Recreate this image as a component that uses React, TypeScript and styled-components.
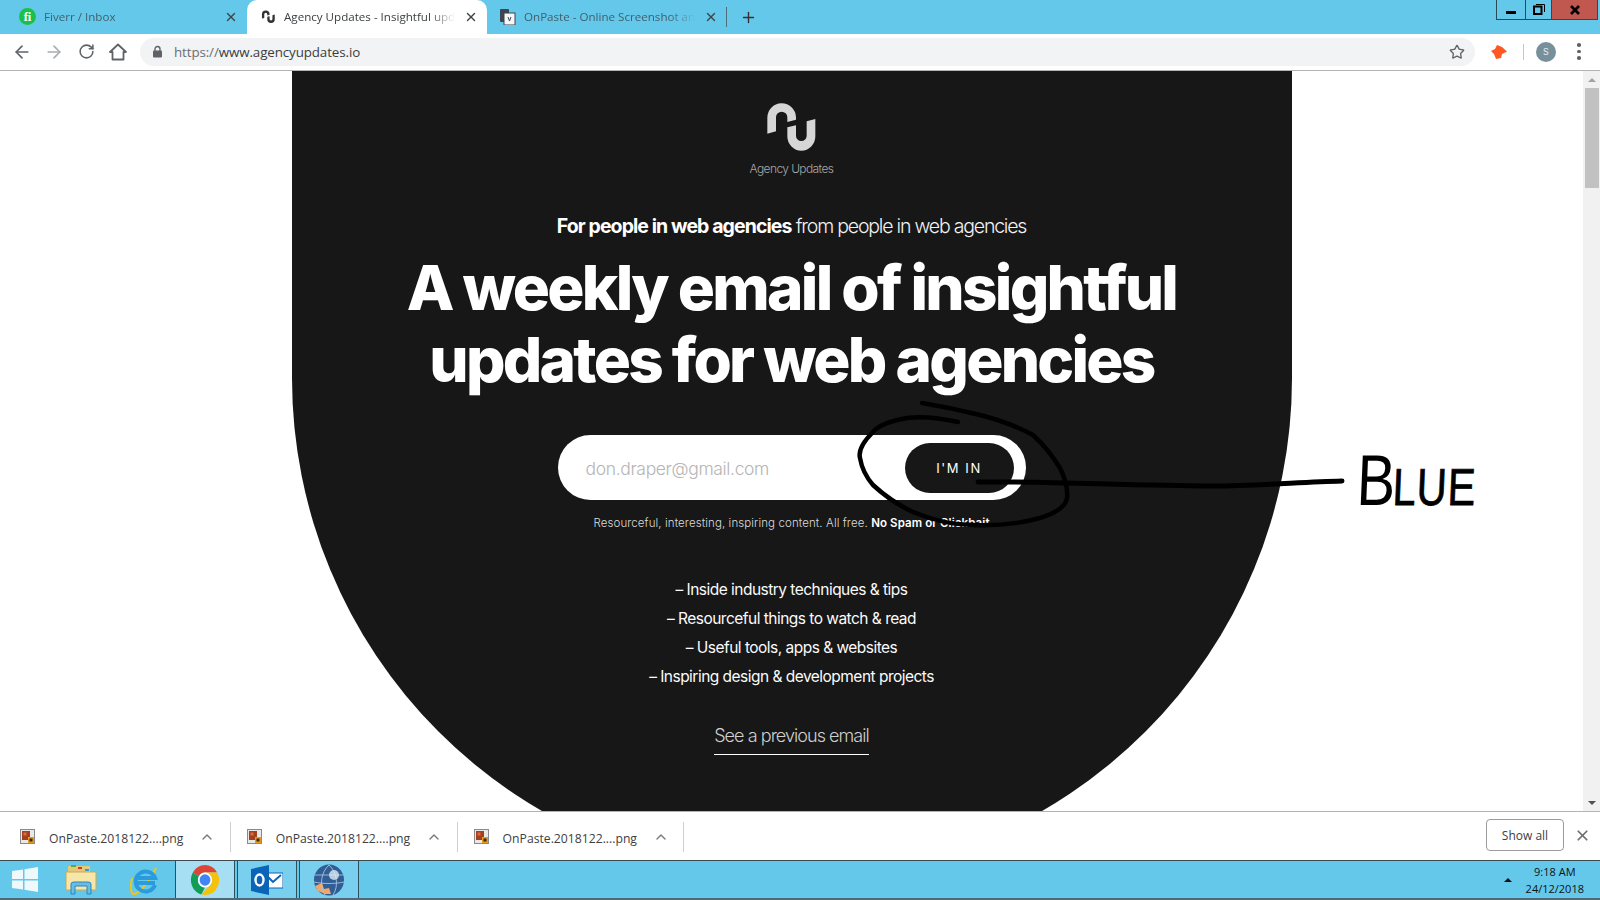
import React from "react";
import styled, { createGlobalStyle } from "styled-components";
import { ArrowLeft, ArrowRight, RotateCw, Star, X, ChevronUp, Plus } from "lucide-react";

const Global = createGlobalStyle`
  html, body { margin: 0; padding: 0; width: 1600px; height: 900px; overflow: hidden; background: #fff; }
  * { box-sizing: border-box; }
`;

const UI = `"Open Sans", "Liberation Sans", sans-serif`;
const SANS = `Inter, "Liberation Sans", sans-serif`;

const Shell = styled.div`
  width: 1600px; height: 900px; display: flex; flex-direction: column; font-family: ${UI};
`;

const TabStrip = styled.div`
  height: 34px; flex: none; background: #63c8ea; display: flex; align-items: flex-end; padding-left: 7px;
`;
const Tab = styled.div<{ $active?: boolean }>`
  width: 240px; height: 34px; display: flex; align-items: center; padding: 0 8px 1px 12px; gap: 8px;
  background: ${p => (p.$active ? "#fff" : "transparent")};
  border-radius: 10px 10px 0 0;
  color: ${p => (p.$active ? "#3c4043" : "#44606c")};
`;
const TabIcon = styled.span`
  width: 17px; height: 17px; flex: none; display: flex; align-items: center; justify-content: center;
`;
const TabTitle = styled.span`
  flex: 1; min-width: 0; font-size: 11.6px; white-space: nowrap; overflow: hidden;
  -webkit-mask-image: linear-gradient(to right, #000 85%, transparent 100%);
  mask-image: linear-gradient(to right, #000 85%, transparent 100%);
`;
const TabClose = styled.span`
  width: 16px; height: 16px; flex: none; display: flex; align-items: center; justify-content: center; color: #444;
`;
const TabDivider = styled.span`
  width: 1px; height: 20px; margin: 0 0 7px -1px; background: #4d6f7d; flex: none;
`;
const NewTab = styled.span`
  width: 42px; height: 34px; display: flex; align-items: center; justify-content: center; color: #333;
`;
const WindowControls = styled.div`
  margin-left: auto; margin-right: 2px; align-self: flex-start; height: 20px; display: flex;
  border: 1px solid #2b4a58; border-top: none;
`;
const WinButton = styled.span<{ $w: number; $close?: boolean }>`
  width: ${p => p.$w}px; display: flex; align-items: center; justify-content: center;
  background: ${p => (p.$close ? "#c0584f" : "transparent")};
  & + & { border-left: 1px solid #2b4a58; }
`;

const Toolbar = styled.div`
  height: 37px; flex: none; background: #fff; border-bottom: 1px solid #b4b4b4; display: flex; align-items: center;
  padding-bottom: 1px; color: #5f6368;
`;
const NavButton = styled.span<{ $muted?: boolean }>`
  width: 32px; height: 32px; flex: none; display: flex; align-items: center; justify-content: center;
  color: ${p => (p.$muted ? "#a9adb1" : "#5f6368")};
`;
const NavGroup = styled.div`
  display: flex; padding-left: 6px; margin-right: 6px;
`;
const Omnibox = styled.div`
  width: 1335px; height: 28px; background: #f1f3f4; border-radius: 14px; display: flex; align-items: center; padding: 0 10px 0 12px;
`;
const UrlText = styled.span`
  margin-left: 11px; font-family: ${UI}; font-size: 13.35px; color: #3a3d40; letter-spacing: -0.1px;
`;
const UrlScheme = styled.span` color: #6a6e72; `;
const StarSlot = styled.span` margin-left: auto; display: flex; color: #5f6368; `;
const ToolExtras = styled.div`
  display: flex; align-items: center; flex: 1; padding-left: 16px;
`;
const ExtDivider = styled.span` width: 1px; height: 16px; background: #c4c7c9; margin-left: 15px; `;
const Avatar = styled.span`
  width: 20px; height: 20px; border-radius: 50%; background: #78909c; color: #e8edf0; font-size: 9px;
  display: flex; align-items: center; justify-content: center; margin-left: 12px; font-family: ${SANS};
`;
const Dots = styled.span`
  margin-left: 21px; display: flex; flex-direction: column; gap: 3px;
`;
const Dot = styled.i` width: 3.5px; height: 3.5px; border-radius: 50%; background: #5f6368; display: block; `;

const Page = styled.div`
  flex: 1; min-height: 0; position: relative; display: flex; overflow: hidden; background: #fff;
`;
const PageBody = styled.div`
  flex: 1; display: flex; justify-content: center; align-items: flex-start;
`;
const Scrollbar = styled.div`
  width: 17px; flex: none; background: #f1f1f1; display: flex; flex-direction: column; align-items: center;
`;
const ScrollArrow = styled.span<{ $down?: boolean }>`
  width: 0; height: 0; border-left: 4px solid transparent; border-right: 4px solid transparent;
  ${p => (p.$down ? "border-top: 4px solid #505050; margin-top: auto; margin-bottom: 6px;" : "border-bottom: 4px solid #a3a3a3; margin-top: 7px;")}
`;
const ScrollThumb = styled.span`
  width: 14px; height: 100px; background: #c1c1c1; margin-top: 6px;
`;

const Hero = styled.section`
  width: 1000px; height: 807px; flex: none; background: #171717; border-radius: 0 0 500px 500px;
  display: flex; flex-direction: column; align-items: center; padding-top: 27px; font-family: ${SANS}; color: #fff;
`;
const LogoMark = styled.svg` width: 60px; height: 60px; display: block; flex: none; margin-left: -3px; `;
const LogoLabel = styled.div`
  font-size: 12px; line-height: 21px; color: #a8a8a8; font-weight: 300; letter-spacing: -0.6px;
`;
const Lead = styled.p`
  margin: 33px 0 0; font-size: 19.5px; line-height: 28px; letter-spacing: -1.2px; font-weight: 300; color: #f2f2f2;
`;
const LeadStrong = styled.strong` font-weight: 700; color: #fff; letter-spacing: -0.92px; `;
const Headline = styled.h1`
  margin: 12px 0 0; font-size: 62px; line-height: 72px; font-weight: 800; letter-spacing: -2.72px; text-align: center;
`;
const Signup = styled.form`
  margin-top: 39px; width: 468px; height: 65px; border-radius: 33px; background: #fff; display: flex; align-items: center;
  padding: 0 12px 0 28px;
`;
const EmailInput = styled.input`
  flex: 1; min-width: 0; border: none; outline: none; background: transparent; font-family: ${SANS}; font-size: 17.5px; font-weight: 300;
  letter-spacing: -0.35px; color: #333; padding: 2px 0 0;
  &::placeholder { color: #b5b5b5; opacity: 1; }
`;
const SubmitButton = styled.button`
  width: 109px; height: 50px; flex: none; border: none; border-radius: 25px; background: #171717; color: #fff;
  font-family: ${SANS}; font-size: 13px; letter-spacing: 1.6px; font-weight: 400; padding: 0;
`;
const FinePrint = styled.p`
  margin: 15px 0 0; font-size: 11.5px; line-height: 16px; color: #dcdcdc; font-weight: 300; letter-spacing: 0.1px;
`;
const FineStrong = styled.strong` font-weight: 600; color: #fff; `;
const Points = styled.ul`
  list-style: none; margin: 44px 0 0; padding: 0; text-align: center;
`;
const Point = styled.li`
  font-size: 15.5px; line-height: 29px; letter-spacing: -0.52px; font-weight: 400; color: #fbfbfb;
`;
const PreviousLink = styled.a`
  margin-top: 33px; font-size: 18px; line-height: 24px; letter-spacing: -0.95px; font-weight: 300; color: #cfcfcf;
  padding-bottom: 6px; border-bottom: 1px solid #fff; width: 155px; text-align: center; white-space: nowrap;
`;

const Ink = styled.svg`
  position: absolute; left: 850px; top: 320px; width: 520px; height: 150px; pointer-events: none;
`;
const Scrawl = styled.span`
  position: absolute; left: 1357px; top: 369px; color: #000; font-family: "Liberation Sans", sans-serif; line-height: 80px;
  font-size: 72px; white-space: nowrap; letter-spacing: -3px;
  transform: scaleX(0.8) skewX(-3deg); transform-origin: left center;
`;
const ScrawlSmall = styled.span` font-size: 52px; letter-spacing: 1px; -webkit-text-stroke: 0.8px #000; `;

const Downloads = styled.div`
  height: 49px; flex: none; background: #fff; border-top: 1px solid #b4b4b4; display: flex; align-items: center; padding-left: 4px;
`;
const DownloadItem = styled.div`
  width: 226.8px; height: 30px; margin-top: 1px; border-right: 1px solid #cfcfcf; display: flex; align-items: center; padding-left: 16px; color: #555;
`;
const DownloadName = styled.span`
  margin-left: 14px; font-size: 12.2px; color: #3c4043; white-space: nowrap; padding-top: 3px;
`;
const DownloadCaret = styled.span` margin-left: 16px; display: flex; color: #777; `;
const ShowAll = styled.button`
  margin-left: auto; margin-bottom: 2px; width: 78px; height: 32px; background: #fff; border: 1px solid #9c9c9c; border-radius: 4px;
  font-family: ${UI}; font-size: 12px; color: #3c4043; padding: 0;
`;
const BarClose = styled.span` width: 36px; margin-bottom: 2px; display: flex; justify-content: center; color: #6e6e6e; `;

const Taskbar = styled.div`
  height: 40px; flex: none; background: #63c8ea; border-top: 1px solid #3c4a50; border-bottom: 2px solid #4d6a75;
  display: flex; align-items: stretch;
`;
const QuickSlot = styled.span<{ $w: number }>`
  width: ${p => p.$w}px; flex: none; display: flex; align-items: center; justify-content: center;
`;
const TaskButton = styled.span<{ $active?: boolean }>`
  width: 60px; flex: none; margin-right: 2px; display: flex; align-items: center; justify-content: center;
  border: 1px solid #2f4f5c; border-width: 0 1px;
  background: ${p => (p.$active ? "#a6dff3" : "#78d0ee")};
`;
const Tray = styled.div`
  margin-left: auto; display: flex; align-items: center; padding-right: 16px; gap: 14px;
`;
const TrayArrow = styled.span`
  width: 0; height: 0; border-left: 4px solid transparent; border-right: 4px solid transparent; border-bottom: 4px solid #111;
`;
const Clock = styled.div`
  font-family: "Open Sans", "Liberation Sans", sans-serif; font-size: 11px; line-height: 17px; color: #111; text-align: center;
`;

const LOGO_N = "M22 107 L22 60 A43 43 0 0 1 108 58 L108 65 L82 72 L82 58 A17 17 0 0 0 48 58 L48 100 Z";
const LOGO_U = "M82 88 L108 82 L108 113 A16 16 0 0 0 140 113 L140 70 L166 63 L166 115 A42 43 0 0 1 82 115 Z";

const FileIcon = () => (
  <svg width="15" height="15" viewBox="0 0 15 15" style={{ flex: "none" }}>
    <rect x="0.5" y="0.5" width="14" height="14" fill="#e8e8e8" stroke="#8a8a8a" />
    <rect x="2" y="2" width="8" height="9" fill="#a4401c" />
    <rect x="3.5" y="3.5" width="3" height="3" fill="#d96a4a" />
    <rect x="8" y="8" width="6" height="6" fill="#e89a1c" />
    <rect x="9.5" y="9.5" width="3" height="3" fill="#3a2a10" />
  </svg>
);

const DownloadEntry = () => (
  <DownloadItem>
    <FileIcon />
    <DownloadName>OnPaste.2018122....png</DownloadName>
    <DownloadCaret><ChevronUp size={16} strokeWidth={2} /></DownloadCaret>
  </DownloadItem>
);

export default function App() {
  return (
    <Shell>
      <Global />
      <TabStrip>
        <Tab>
          <TabIcon>
            <svg width="17" height="17" viewBox="0 0 17 17"><circle cx="8.5" cy="8.5" r="8.5" fill="#1dbf4c" /><text x="8.5" y="13" textAnchor="middle" fontSize="12.5" fontWeight="700" fill="#fff" fontFamily="Liberation Serif, serif">fi</text></svg>
          </TabIcon>
          <TabTitle>Fiverr / Inbox</TabTitle>
          <TabClose><X size={14} strokeWidth={2.4} /></TabClose>
        </Tab>
        <Tab $active>
          <TabIcon>
            <svg width="16" height="16" viewBox="0 0 180 180"><path d={LOGO_N} fill="#333" /><path d={LOGO_U} fill="#333" /></svg>
          </TabIcon>
          <TabTitle>Agency Updates - Insightful updates for web agencies</TabTitle>
          <TabClose><X size={14} strokeWidth={2.4} /></TabClose>
        </Tab>
        <Tab>
          <TabIcon>
            <svg width="17" height="17" viewBox="0 0 17 17"><rect x="1" y="1" width="9" height="13" rx="1" fill="#3c4550" /><rect x="5" y="5" width="11" height="12" fill="#f4f6f7" stroke="#3c4550" /><path d="M9 9 L10.5 13 L12 9" stroke="#3c4550" fill="none" /></svg>
          </TabIcon>
          <TabTitle>OnPaste - Online Screenshot and Drawing Tool</TabTitle>
          <TabClose><X size={14} strokeWidth={2.4} /></TabClose>
        </Tab>
        <TabDivider />
        <NewTab><Plus size={17} strokeWidth={2} /></NewTab>
        <WindowControls>
          <WinButton $w={28}>
            <svg width="12" height="12" viewBox="0 0 12 12"><rect x="1" y="7" width="10" height="3" fill="#000" /></svg>
          </WinButton>
          <WinButton $w={26}>
            <svg width="12" height="12" viewBox="0 0 12 12"><path d="M3 0.5 H11.5 V8" fill="none" stroke="#000" /><rect x="1" y="2.5" width="7.5" height="7.5" fill="none" stroke="#000" strokeWidth="2" /></svg>
          </WinButton>
          <WinButton $w={46} $close>
            <svg width="12" height="12" viewBox="0 0 12 12"><path d="M2 2 L10 10 M10 2 L2 10" stroke="#000" strokeWidth="2.6" /></svg>
          </WinButton>
        </WindowControls>
      </TabStrip>

      <Toolbar>
        <NavGroup>
          <NavButton><ArrowLeft size={20} strokeWidth={2} /></NavButton>
          <NavButton $muted><ArrowRight size={20} strokeWidth={2} /></NavButton>
          <NavButton><RotateCw size={17} strokeWidth={2.2} /></NavButton>
          <NavButton>
            <svg width="20" height="20" viewBox="0 0 20 20"><path d="M10 2.5 L18 10 H15.5 V17.5 H4.5 V10 H2 Z" fill="none" stroke="currentColor" strokeWidth="1.8" strokeLinejoin="round" /></svg>
          </NavButton>
        </NavGroup>
        <Omnibox>
          <svg width="11" height="13" viewBox="0 0 11 13"><path d="M3 6 V4 A2.5 2.5 0 0 1 8 4 V6" fill="none" stroke="#5f6368" strokeWidth="1.4" /><rect x="1" y="5.5" width="9" height="7" rx="1" fill="#5f6368" /></svg>
          <UrlText><UrlScheme>https://</UrlScheme>www.agencyupdates.io</UrlText>
          <StarSlot><Star size={16} strokeWidth={2} /></StarSlot>
        </Omnibox>
        <ToolExtras>
          <svg width="17" height="14" viewBox="0 0 17 14"><path d="M0 6 L4 4 L6 0 L11 2 L16 6.5 L11 9 L10 13 L5 14 L3 9 Z" fill="#ff5722" /></svg>
          <ExtDivider />
          <Avatar>S</Avatar>
          <Dots><Dot /><Dot /><Dot /></Dots>
        </ToolExtras>
      </Toolbar>

      <Page>
        <PageBody>
          <Hero>
            <LogoMark viewBox="0 0 180 180"><path d={LOGO_N} fill="#d6d6d6" /><path d={LOGO_U} fill="#d6d6d6" /></LogoMark>
            <LogoLabel>Agency Updates</LogoLabel>
            <Lead><LeadStrong>For people in web agencies</LeadStrong> from people in web agencies</Lead>
            <Headline>A weekly email of insightful<br />updates for web agencies</Headline>
            <Signup onSubmit={e => e.preventDefault()}>
              <EmailInput placeholder="don.draper@gmail.com" readOnly />
              <SubmitButton type="button">I'M IN</SubmitButton>
            </Signup>
            <FinePrint>Resourceful, interesting, inspiring content. All free. <FineStrong>No Spam or Clickbait</FineStrong></FinePrint>
            <Points>
              <Point>– Inside industry techniques &amp; tips</Point>
              <Point>– Resourceful things to watch &amp; read</Point>
              <Point>– Useful tools, apps &amp; websites</Point>
              <Point>– Inspiring design &amp; development projects</Point>
            </Points>
            <PreviousLink>See a previous email</PreviousLink>
          </Hero>
        </PageBody>
        <Scrollbar>
          <ScrollArrow />
          <ScrollThumb />
          <ScrollArrow $down />
        </Scrollbar>
        <Ink viewBox="850 391 520 150">
          <path
            d="M958 422 C940 418 922 416 907 418 C890 421 878 426 873 432 C863 442 858 450 860 458 C862 470 867 478 873 485 C886 497 900 506 913 512 C935 521 955 525 973 525 C1000 526 1022 523 1040 518 C1056 513 1066 506 1067 498 C1068 488 1065 478 1060 468 C1052 455 1043 444 1033 435 C1018 427 1000 420 980 415 C960 410 940 406 922 403"
            fill="none" stroke="#000" strokeWidth="4.5" strokeLinecap="round"
          />
          <path d="M978 482 C1050 481 1130 486 1213 486 C1260 486 1300 482 1342 481" fill="none" stroke="#000" strokeWidth="5" strokeLinecap="round" />
        </Ink>
        <Scrawl>B<ScrawlSmall>LUE</ScrawlSmall></Scrawl>
      </Page>

      <Downloads>
        <DownloadEntry />
        <DownloadEntry />
        <DownloadEntry />
        <ShowAll>Show all</ShowAll>
        <BarClose><X size={17} strokeWidth={2.4} /></BarClose>
      </Downloads>

      <Taskbar>
        <QuickSlot $w={50}>
          <svg width="28" height="25" viewBox="0 0 28 25"><path d="M1 4 L12 2.4 V12 H1 Z M13.5 2.2 L27 0 V12 H13.5 Z M1 13.5 H12 V22.5 L1 21 Z M13.5 13.5 H27 V25 L13.5 22.8 Z" fill="#eef9fd" /></svg>
        </QuickSlot>
        <QuickSlot $w={62}>
          <svg width="32" height="32" viewBox="0 0 32 32">
            <rect x="3" y="2" width="22" height="8" fill="#e5c878" />
            <rect x="6" y="1" width="5" height="2" fill="#4caf50" /><rect x="13" y="3" width="4" height="2" fill="#d33" /><rect x="20" y="5" width="4" height="2" fill="#2a9fd8" />
            <path d="M1 8 H31 V26 H1 Z" fill="#f6e6a8" stroke="#c9a95b" />
            <path d="M6 30 V20 Q6 18 9 18 H23 Q26 18 26 20 V30 H22 V22 H10 V30 Z" fill="#66bde6" stroke="#2b86bd" />
          </svg>
        </QuickSlot>
        <QuickSlot $w={63}>
          <svg width="32" height="32" viewBox="0 0 32 32">
            <path d="M4 14 C2 24 3 30 6 30 C10 30 20 20 28 4" fill="none" stroke="#f0c419" strokeWidth="2" />
            <path d="M27 21 A10 10 0 1 1 27 14 H10 M9 19 H27" fill="none" stroke="#2a9bdc" strokeWidth="4" />
          </svg>
        </QuickSlot>
        <TaskButton $active>
          <svg width="30" height="32" viewBox="0 0 32 32" preserveAspectRatio="none">
            <path d="M16 1 A15 15 0 0 1 29 8.5 H16 A7.5 7.5 0 0 0 9.5 12.2 L3 8.5 A15 15 0 0 1 16 1 Z" fill="#db4437" />
            <path d="M3 8.5 L9.5 12.2 A7.5 7.5 0 0 0 16 23.5 L12 30.5 A15 15 0 0 1 3 8.5 Z" fill="#0f9d58" />
            <path d="M29 8.5 A15 15 0 0 1 16 31 L12 30.5 L19.5 22.5 A7.5 7.5 0 0 0 22.5 12 L16 8.5 Z" fill="#f4c20d" />
            <circle cx="16" cy="16" r="7.5" fill="#fff" /><circle cx="16" cy="16" r="5.8" fill="#4285f4" />
          </svg>
        </TaskButton>
        <TaskButton>
          <svg width="32" height="30" viewBox="0 0 32 30">
            <rect x="14" y="8" width="18" height="15" fill="#fff" stroke="#0a64b8" />
            <path d="M17 12 L22 17 L30 10" fill="none" stroke="#0a64b8" strokeWidth="2" />
            <path d="M0 4 L18 0 V30 L0 26 Z" fill="#0a64b8" />
            <ellipse cx="8.5" cy="15" rx="4" ry="5.5" fill="none" stroke="#fff" strokeWidth="2.4" />
          </svg>
        </TaskButton>
        <TaskButton>
          <svg width="32" height="32" viewBox="0 0 32 32">
            <ellipse cx="16" cy="16" rx="15" ry="15.5" fill="#2f5d94" />
            <path d="M2 22 L9 19 L11 25 L16 24 L18 30 L12 30 L5 27 Z" fill="#f0a868" />
            <path d="M16 1 C8 8 6 22 12 31 M16 1 C24 8 26 22 20 31 M2 11 H30 M1 18 C10 20 22 20 31 18" fill="none" stroke="#a8c4de" strokeWidth="0.9" />
            <circle cx="21" cy="11" r="5" fill="#dbe8f4" opacity="0.8" />
          </svg>
        </TaskButton>
        <Tray>
          <TrayArrow />
          <Clock>9:18 AM<br />24/12/2018</Clock>
        </Tray>
      </Taskbar>
    </Shell>
  );
}
